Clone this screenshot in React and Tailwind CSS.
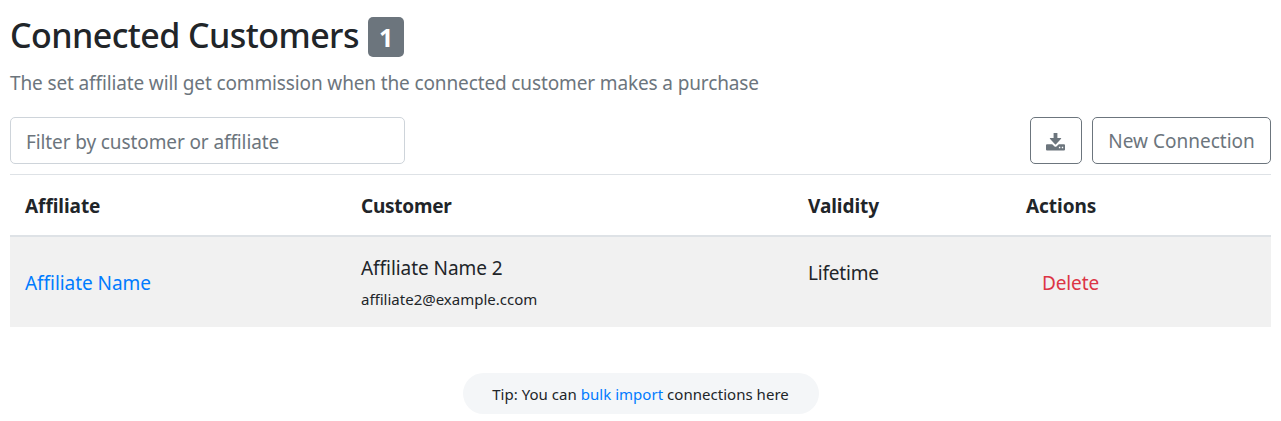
import React from "react";

const cell = "px-[15px] text-left";
const headCell = "border-t border-b-2 border-[#dee2e6] px-[15px] pt-[2px] text-left font-bold";

function DownloadIcon() {
  return (
    <svg viewBox="0 0 19 18" className="mr-px h-[18px] w-[19px]" fill="currentColor" aria-hidden="true">
      <path d="M7.6 0h3.8v5h3.2q1 0 .5.8L10 11.2q-.5.5-1 0L3.9 5.8q-.5-.8.5-.8h3.2z" />
      <path
        fillRule="evenodd"
        d="M1 11.2h5.2l2.1 2q1.2 1 2.4 0l2.1-2H18q1 0 1 1v4.3q0 1-1 1H1q-1 0-1-1v-4.3q0-1 1-1zM12.9 13.7v1.5h1.4v-1.5zM15.8 13.7v1.5h1.4v-1.5z"
      />
    </svg>
  );
}

export default function App() {
  return (
    <div className="h-[421px] w-[1281px] overflow-hidden bg-white px-[10px] pt-[17px] font-['Noto_Sans',sans-serif] text-[19px] tracking-[-0.13px] text-[#212529]">
      <header className="flex h-10 items-center gap-[10px]">
        <h1 className="w-[348px] whitespace-nowrap pb-[5px] text-[34px] leading-[40px] font-medium tracking-[-0.56px]">
          Connected Customers
        </h1>
        <span className="flex h-10 w-9 items-center justify-center rounded-[5px] bg-[#6c757d] pt-px text-[25px] leading-none font-bold text-white">
          1
        </span>
      </header>
      <p className="mt-[11px] h-[30px] leading-[30px] text-[#6c757d]">
        The set affiliate will get commission when the connected customer makes a purchase
      </p>
      <div className="mt-[19px] flex h-[47px] justify-between">
        <input
          type="text"
          placeholder="Filter by customer or affiliate"
          className="h-[47px] w-[395px] rounded-[5px] border border-[#ced4da] px-[15px] pt-[2px] tracking-[-0.11px] placeholder:text-[#6c757d] placeholder:opacity-100"
        />
        <div className="flex gap-[10px] text-[#6c757d]">
          <button aria-label="Download" className="flex w-[52px] items-center justify-center rounded-[5px] border border-[#6c757d] pt-[3px]">
            <DownloadIcon />
          </button>
          <button className="w-[179px] whitespace-nowrap rounded-[5px] border border-[#6c757d] pt-[2px] tracking-[0.01px]">
            New Connection
          </button>
        </div>
      </div>
      <table className="mt-[10px] w-[1261px] table-fixed border-separate border-spacing-0">
        <colgroup>
          <col className="w-[336px]" />
          <col className="w-[447px]" />
          <col className="w-[218px]" />
          <col className="w-[260px]" />
        </colgroup>
        <thead>
          <tr className="h-[63px] tracking-[-0.05px]">
            <th className={headCell}>Affiliate</th>
            <th className={headCell + " tracking-[-0.25px]"}>Customer</th>
            <th className={headCell}>Validity</th>
            <th className={headCell}>Actions</th>
          </tr>
        </thead>
        <tbody>
          <tr className="h-[90px] bg-[#f1f1f1]">
            <td className={cell}>
              <a href="#" className="block pt-[2px] tracking-[-0.05px] text-[#007bff]">Affiliate Name</a>
            </td>
            <td className={cell + " pt-[2px]"}>
              <div className="leading-[32px] tracking-[-0.05px]">Affiliate Name 2</div>
              <div className="text-[15px] leading-[30px] tracking-[0px]">affiliate2@example.ccom</div>
            </td>
            <td className={cell + " pt-[21px] align-top leading-[30px] tracking-[-0.2px]"}>Lifetime</td>
            <td className={cell}>
              <button className="block px-4 pt-[2px] tracking-[-0.13px] text-[#dc3545]">Delete</button>
            </td>
          </tr>
        </tbody>
      </table>
      <div className="mx-auto mt-[46px] flex h-[41px] w-[356px] items-center justify-center whitespace-pre rounded-full bg-[#f4f6f8] pt-[2px] text-[15px] tracking-[0.03px]">
        Tip: You can <a href="#" className="text-[#007bff]">bulk import</a> connections here
      </div>
    </div>
  );
}
